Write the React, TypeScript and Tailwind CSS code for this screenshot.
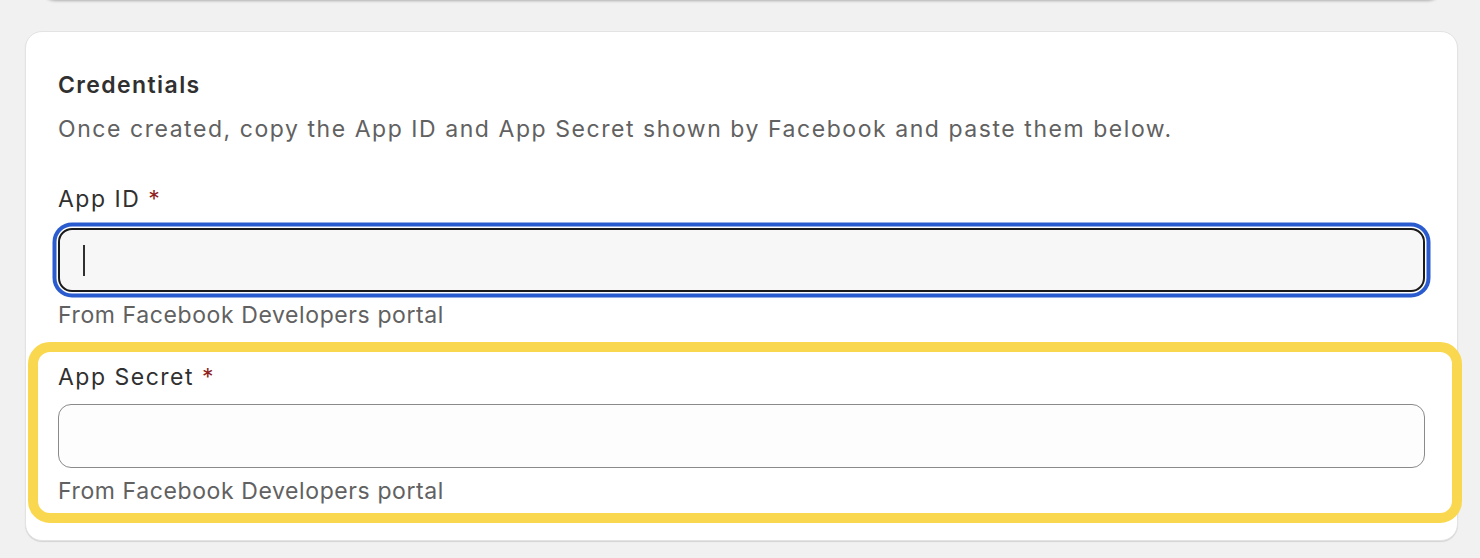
const font = { fontFamily: "Inter, 'Noto Sans', sans-serif" };

interface FieldProps {
  label: string;
  help: string;
  focused?: boolean;
}

const Field = ({ label, help, focused }: FieldProps) => {
  return (
    <div>
      <label className="block text-[23px] leading-[34px] tracking-[1.5px] text-[#303030]">
        {label} <span className="text-[#8e1f21]">*</span>
      </label>
      {focused ? (
        <div className="mt-[12px] h-[64px] rounded-[14px] border-2 border-[#1a1a1a] bg-[#f7f7f7] shadow-[0_0_0_1.5px_#ffffff,0_0_0_5.5px_#2a5bcf] flex items-center pl-[23px]">
          <div className="w-[1.5px] h-[31px] bg-[#303030]" />
        </div>
      ) : (
        <div className="mt-[10px] h-[64px] rounded-[13px] border border-[#8a8a8a] bg-[#fdfdfd]" />
      )}
      <p className="mt-[6px] text-[23px] leading-[34px] tracking-[0.6px] text-[#616161]">{help}</p>
    </div>
  );
};

export default function App() {
  return (
    <div className="flex flex-col h-[558px] overflow-hidden bg-[#f1f1f1]" style={font}>
      <div className="ml-[40px] mr-[37px] -mt-[22px] h-[22px] shrink-0 rounded-b-[16px] bg-white shadow-[0_1px_3px_rgba(0,0,0,0.28)]" />

      <section className="ml-[25px] mr-[22px] mt-[31px] rounded-[17px] border border-[#e3e3e3] bg-white px-[32px] pt-[36px] pb-[32px] shadow-[0_1px_1px_rgba(0,0,0,0.12)]">
        <h2 className="text-[23px] leading-[34px] font-semibold tracking-[1.4px] text-[#303030]">Credentials</h2>
        <p className="mt-[10px] text-[23px] leading-[34px] tracking-[1.55px] text-[#616161]">
          Once created, copy the App ID and App Secret shown by Facebook and paste them below.
        </p>

        <div className="mt-[36px]">
          <Field label="App ID" help="From Facebook Developers portal" focused />
        </div>

        <div className="relative mt-[28px]">
          <Field label="App Secret" help="From Facebook Developers portal" />
          <div className="pointer-events-none absolute -left-[30px] -top-[18px] -right-[37px] -bottom-[15px] rounded-[22px] border-[10.5px] border-[#f9d84f]" />
        </div>
      </section>
    </div>
  );
}
